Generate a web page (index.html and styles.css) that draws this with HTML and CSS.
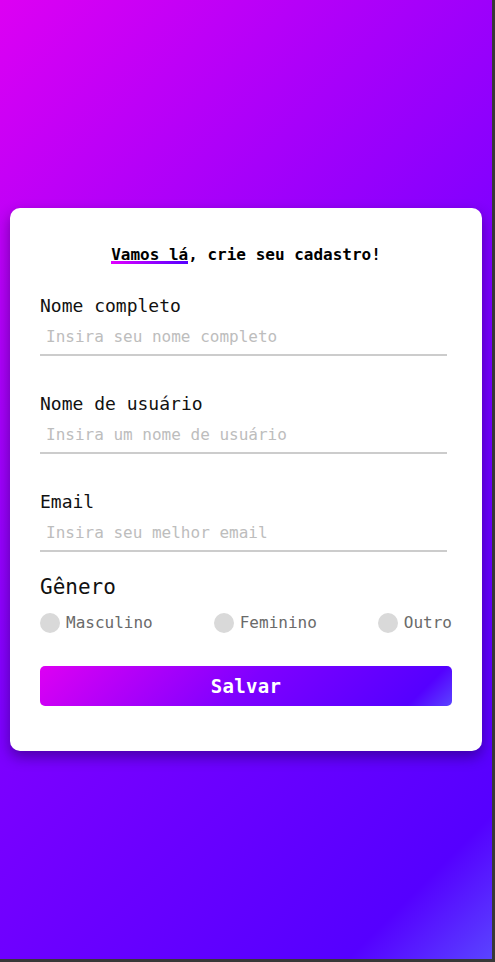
FILE: index.html
```html
<!DOCTYPE html>
<html lang="pt-BR">
<head>
<meta charset="utf-8">
<title>Cadastro</title>
<link rel="stylesheet" href="styles.css">
</head>
<body>
<div class="page">
  <form class="card">
    <h1 class="title"><span class="hl">Vamos lá</span>, crie seu cadastro!</h1>
    <div class="field">
      <label class="label" for="nome">Nome completo</label>
      <input class="input" id="nome" type="text" placeholder="Insira seu nome completo">
    </div>
    <div class="field">
      <label class="label" for="user">Nome de usuário</label>
      <input class="input" id="user" type="text" placeholder="Insira um nome de usuário">
    </div>
    <div class="field">
      <label class="label" for="email">Email</label>
      <input class="input" id="email" type="email" placeholder="Insira seu melhor email">
    </div>
    <div class="gender">
      <div class="gender-title">Gênero</div>
      <div class="options">
        <label class="option"><span class="dot"></span>Masculino</label>
        <label class="option"><span class="dot"></span>Feminino</label>
        <label class="option"><span class="dot"></span>Outro</label>
      </div>
    </div>
    <button class="btn" type="button">Salvar</button>
  </form>
</div>
</body>
</html>
```

FILE: styles.css
```css
html, body {
  margin: 0;
  padding: 0;
  background: #383838;
  height: 100%;
}
body {
  font-family: "DejaVu Sans Mono", "Liberation Mono", monospace;
}
.page {
  width: calc(100vw - 3px);
  height: calc(100vh - 3px);
  background: linear-gradient(135deg, #dd00f3 0%, #7f00ff 50%, #5500ff 90%, #5a44ff 100%);
  display: flex;
  align-items: center;
  justify-content: center;
}
.card {
  box-sizing: border-box;
  width: 472px;
  height: 543px;
  background: #fff;
  border-radius: 10px;
  box-shadow: 0 6px 14px rgba(20, 0, 60, 0.45);
  padding: 37px 30px 45px 30px;
  display: flex;
  flex-direction: column;
}
.title {
  margin: 0 0 29px 0;
  font-size: 16px;
  line-height: 20px;
  font-weight: bold;
  text-align: center;
  color: #000;
}
.hl {
  background: linear-gradient(90deg, #e100ff, #5500ff) no-repeat left bottom / 100% 3px;
}
.field {
  display: flex;
  flex-direction: column;
  margin-bottom: 36px;
}
.field:nth-of-type(3) {
  margin-bottom: 0;
}
.label {
  font-size: 18px;
  line-height: 24px;
  color: #111;
}
.input {
  box-sizing: border-box;
  width: 407px;
  height: 38px;
  border: none;
  border-bottom: 2px solid #cccccc;
  padding: 0 0 0 6px;
  margin: 0;
  font-family: "DejaVu Sans Mono", "Liberation Mono", monospace;
  font-size: 16px;
  color: #333;
  outline: none;
  background: transparent;
}
.input::placeholder {
  color: #bdbdbd;
}
.gender {
  margin-top: 22px;
}
.gender-title {
  font-size: 21px;
  line-height: 26px;
  color: #111;
}
.options {
  margin-top: 13px;
  display: flex;
  justify-content: space-between;
}
.option {
  display: flex;
  align-items: center;
  gap: 6px;
  font-size: 16px;
  line-height: 20px;
  color: #6a6a6a;
}
.dot {
  width: 20px;
  height: 20px;
  border-radius: 50%;
  background: #d9d9d9;
}
.btn {
  margin-top: 33px;
  height: 40px;
  width: 100%;
  border: none;
  border-radius: 5px;
  background: linear-gradient(135deg, #dd00f3 0%, #7f00ff 50%, #5500ff 90%, #5a44ff 100%);
  color: #fff;
  font-family: "DejaVu Sans Mono", "Liberation Mono", monospace;
  font-size: 19px;
  font-weight: bold;
  letter-spacing: 0.3px;
}
```
